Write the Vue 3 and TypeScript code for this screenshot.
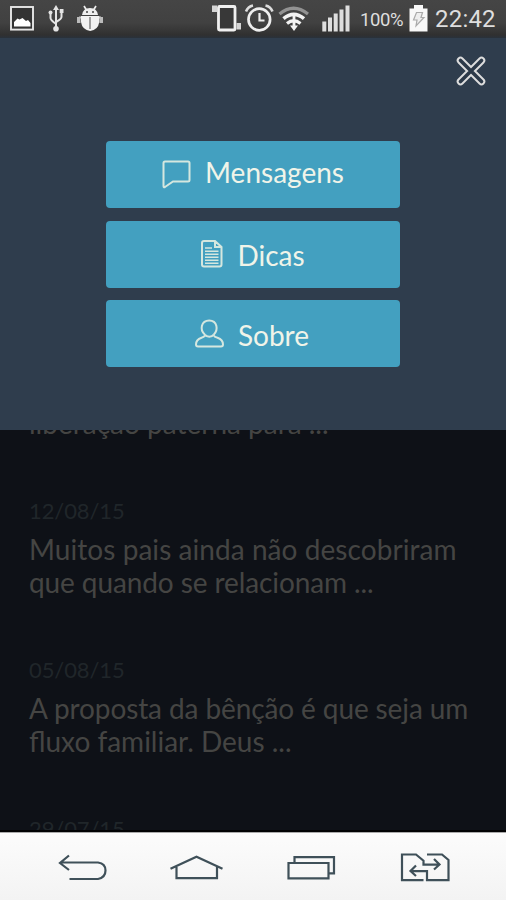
<script setup lang="ts">
type IconName = 'chat' | 'doc' | 'person'

interface MenuItem {
  label: string
  icon: IconName
}

interface Line {
  text: string
  tracking: number
}

interface Message {
  date: string
  lines: Line[]
}

const menu: MenuItem[] = [
  { label: 'Mensagens', icon: 'chat' },
  { label: 'Dicas', icon: 'doc' },
  { label: 'Sobre', icon: 'person' },
]

const messages: Message[] = [
  {
    date: '12/08/15',
    lines: [
      { text: 'Muitos pais ainda não descobriram', tracking: 0.06 },
      { text: 'que quando se relacionam ...', tracking: -0.1 },
    ],
  },
  {
    date: '05/08/15',
    lines: [
      { text: 'A proposta da bênção é que seja um', tracking: -0.11 },
      { text: 'fluxo familiar. Deus ...', tracking: 0 },
    ],
  },
  { date: '29/07/15', lines: [] },
]

const trackingStyle = (line: Line) =>
  line.tracking ? { letterSpacing: `${line.tracking}px` } : {}
</script>

<template>
  <div class="screen">
    <header class="status">
      <div class="status-group">
        <svg width="40" height="38" viewBox="0 0 40 38">
          <rect x="11" y="7" width="22" height="22.6" fill="#333" stroke="#e6e6e6" stroke-width="1.9" />
          <path d="M14 26.5V22l3.5-3.5 2 1 3-1.5 3.500 3 2-1 2.500 3v3.500z" fill="#fff" />
        </svg>
        <svg width="32" height="38" viewBox="40 0 32 38">
          <path d="M56 9v19M50.500 13v5q0 2 5.500 6M61.500 11v6q0 2-5.500 5" fill="none" stroke="#e4e4e4" stroke-width="2" />
          <path d="M56 5l3 5h-6z" fill="#e4e4e4" />
          <circle cx="50.500" cy="12.500" r="2" fill="#e4e4e4" />
          <rect x="59.700" y="9" width="3.800" height="4" fill="#e4e4e4" />
          <circle cx="56" cy="28.700" r="2.800" fill="#e4e4e4" />
        </svg>
        <svg width="36" height="38" viewBox="72 0 36 38">
          <path d="M84 6l2.500 4M96 6l-2.500 4" stroke="#eee" stroke-width="1.700" />
          <path d="M82 15q1-7 8-7t8 7z" fill="#eee" />
          <circle cx="87" cy="12" r="1" fill="#444" /><circle cx="93" cy="12" r="1" fill="#444" />
          <path d="M79 17.500h22" stroke="#ccc" stroke-width="2" />
          <rect x="77" y="17" width="3.500" height="6" fill="#bbb" />
          <rect x="99.500" y="17" width="3.500" height="6" fill="#bbb" />
          <path d="M81 16h18.300v6q-1.300 8-9.100 9-7.900-1-9.200-9z" fill="#f2f2f2" />
          <path d="M90 17v12" stroke="#666" stroke-width="1.200" />
        </svg>
      </div>
      <div class="status-group">
        <svg width="33" height="38" viewBox="210 0 33 38">
          <rect x="218.500" y="6.500" width="16.500" height="23.500" rx="1" fill="#383838" stroke="#f0f0f0" stroke-width="2.800" />
          <path d="M217 5.500h-5v6.500h5zM236.500 23h4.500v6.500h-4.500z" fill="#d5d5d5" />
        </svg>
        <svg width="33" height="38" viewBox="243 0 33 38">
          <circle cx="259.300" cy="19.500" r="10.800" fill="none" stroke="#eee" stroke-width="2.700" />
          <path d="M259.500 13v7.500h5" fill="none" stroke="#eee" stroke-width="2.200" />
          <path d="M246 11.500q2-5 7-6M272.500 11.500q-2-5-7-6" fill="none" stroke="#ddd" stroke-width="2.600" />
        </svg>
        <svg width="38" height="38" viewBox="276 0 38 38">
          <path d="M279.500 14q14-11.500 28.500 0" fill="none" stroke="#929292" stroke-width="3.200" />
          <path d="M283.500 18.700q10.200-8.500 20.500 0" fill="none" stroke="#f3f3f3" stroke-width="3.600" />
          <path d="M287 23.500q6.700-5.500 13.500 0" fill="none" stroke="#f3f3f3" stroke-width="3.200" />
          <path d="M294 13v14" stroke="#f3f3f3" stroke-width="2.800" />
          <path d="M290 25.500h8l-4 5.500z" fill="#f3f3f3" />
        </svg>
        <svg width="46" height="38" viewBox="314 0 46 38">
          <path d="M322.300 21.500h4v10h-4zM328 17.500h4v14h-4zM333.700 13.500h4v18h-4zM339.500 9.500h4v22h-4zM345.500 5.500h4v26h-4z" fill="#dedede" />
        </svg>
        <span class="percent">100%</span>
        <svg width="30" height="38" viewBox="404 0 30 38">
          <path d="M409.500 8.500h4.500V5h9v3.500h4.500V31.500h-18z" fill="#f8f8f8" />
          <path d="M416.500 12.500h6l-1.500 5h3l-8 8.500 1-6h-3.500z" fill="#eee" stroke="#aaa" stroke-width="1.200" />
        </svg>
        <span class="clock">22:42</span>
      </div>
    </header>

    <section class="panel">
      <div class="panel-top">
        <svg class="close" width="32" height="32" viewBox="0 0 32 32">
          <path d="M5.500 5.500l21 21M26.500 5.500l-21 21" stroke="#ddd" stroke-width="7.500" stroke-linecap="round" />
          <path d="M5.500 5.500l21 21M26.500 5.500l-21 21" stroke="#2c3948" stroke-width="3.600" stroke-linecap="round" />
        </svg>
      </div>
      <nav class="menu">
        <button v-for="item in menu" :key="item.label" class="menu-button" :class="item.icon" type="button">
          <svg v-if="item.icon === 'chat'" width="29" height="29" viewBox="0 0 29 29">
            <path d="M3 1.500h23q1.500 0 1.500 1.500v17q0 1.500-1.500 1.500H11L3 27q-1.500.8-1.500-1V3q0-1.500 1.500-1.500z" />
          </svg>
          <svg v-else-if="item.icon === 'doc'" width="22" height="29" viewBox="0 0 22 29">
            <path d="M3 1h11l6.500 6v17.500q0 2-2 2H3q-2 0-2-2V3q0-2 2-2zM14 1v6h6" />
            <path class="thin" d="M4 8h7M4 11.300h13.500M4 14.300h13.500M4 17.300h13.500M4 20.300h13.500M4 23.300h13.500" />
          </svg>
          <svg v-else width="29" height="29" viewBox="0 0 29 29">
            <path d="M9.800 15.500C4.500 11 6 1.500 14.200 1.500S23.500 11 18.800 15.500M9.800 15.500q1.500 2.200 4.500 2.200t4.500-2.200M9.800 16.500q-.5 1.500-3.300 2.200Q1 20.500 1 25.500q0 2 2 2h23q2 0 2-2 0-5-5.500-6.800-3.200-.7-3.700-2.200" />
          </svg>
          <span class="menu-label">{{ item.label }}</span>
        </button>
      </nav>
    </section>

    <main class="feed">
      <p class="text tail">liberação paterna para ...</p>
      <article v-for="message in messages" :key="message.date" class="entry">
        <time class="date">{{ message.date }}</time>
        <p v-for="line in message.lines" :key="line.text" class="text" :style="trackingStyle(line)">{{ line.text }}</p>
      </article>
    </main>

    <footer class="keys">
      <svg width="112" height="32" viewBox="57 852 112 32">
        <path d="M69 855.500l-9 7.500 9 7M60 862.500h38q7.500 1 7.500 8t-7.500 8.500H69.500" />
      </svg>
      <svg width="117" height="32" viewBox="169 852 117 32">
        <path d="M170.500 868.700l26-12 26 12M176.500 867v11.200h40.500v-11.200" />
      </svg>
      <svg width="113" height="32" viewBox="286 852 113 32">
        <path d="M288.500 863h40v15.300h-40zM294.500 862v-4.800h39.500V873.300h-5" />
      </svg>
      <svg width="52" height="32" viewBox="399 852 52 32">
        <path d="M423.500 880.200h-21.500v-25.700h14l7.500 6.200v4h15M434 859l5.500 5.500-5.500 5M427 854.500h15l6.500 5.500v20.200h-21.500v-9h-16M416 865.500l-5.500 5.500 5.500 5" />
      </svg>
    </footer>
  </div>
</template>

<style>
body {
  margin: 0;
  background: #0e1117;
}
</style>

<style scoped>
.screen {
  width: 506px;
  height: 900px;
  display: flex;
  flex-direction: column;
  overflow: hidden;
  font-family: Lato, sans-serif;
}

.status {
  flex: none;
  height: 38px;
  display: flex;
  justify-content: space-between;
  background: linear-gradient(#454545, #414141 60%, #303030 92%, #29313b);
  font-family: Roboto, sans-serif;
  color: #dedede;
}

.status-group {
  display: flex;
}

.percent {
  width: 44px;
  font-size: 18.5px;
  line-height: 40px;
  letter-spacing: -0.4px;
  white-space: nowrap;
}

.clock {
  width: 72px;
  padding-left: 1px;
  box-sizing: border-box;
  font-size: 24px;
  line-height: 38px;
  letter-spacing: 0.2px;
}

.panel {
  flex: none;
  height: 392px;
  box-sizing: border-box;
  background: #2f3d4d;
}

.panel-top {
  height: 103px;
  box-sizing: border-box;
  display: flex;
  justify-content: flex-end;
  padding: 17px 19px 0 0;
}

.close {
  fill: none;
}

.menu {
  display: flex;
  flex-direction: column;
  align-items: center;
  gap: 12.5px;
}

.menu-button {
  width: 293.5px;
  height: 67px;
  padding: 0;
  border: 0;
  border-radius: 4px;
  display: flex;
  align-items: center;
  justify-content: center;
  gap: 14px;
  background: #43a0c0;
  color: #f0f4e9;
  font-family: inherit;
  font-size: 28px;
  line-height: 34px;
}

.menu-button svg {
  fill: none;
  stroke: #d5e7df;
  stroke-width: 2;
}

.menu-button .thin {
  stroke-width: 1.4;
}

.person svg {
  margin-left: -2px;
}

.chat .menu-label {
  padding-bottom: 6px;
}

.doc .menu-label,
.person .menu-label {
  padding-top: 2px;
}

.feed {
  flex: 1;
  min-height: 0;
  overflow: hidden;
  padding-left: 29px;
  background: #0e1117;
  border-bottom: 2px solid #020304;
}

.text {
  margin: 0;
  font-size: 28px;
  line-height: 33.5px;
  color: #454543;
  white-space: nowrap;
}

.tail {
  margin-top: -23px;
}

.entry {
  height: 103px;
  margin-top: 56px;
}

.date {
  display: block;
  height: 36px;
  font-size: 22px;
  line-height: 27px;
  letter-spacing: -0.1px;
  color: #20262a;
}

.keys {
  flex: none;
  height: 68px;
  box-sizing: border-box;
  display: flex;
  align-items: flex-start;
  padding: 19px 0 0 57px;
  border-top: 1px solid #aaa;
  background: linear-gradient(#fcfcfc, #f3f3f3);
}

.keys svg {
  fill: none;
  stroke: #3f5059;
  stroke-width: 2.2;
}
</style>
